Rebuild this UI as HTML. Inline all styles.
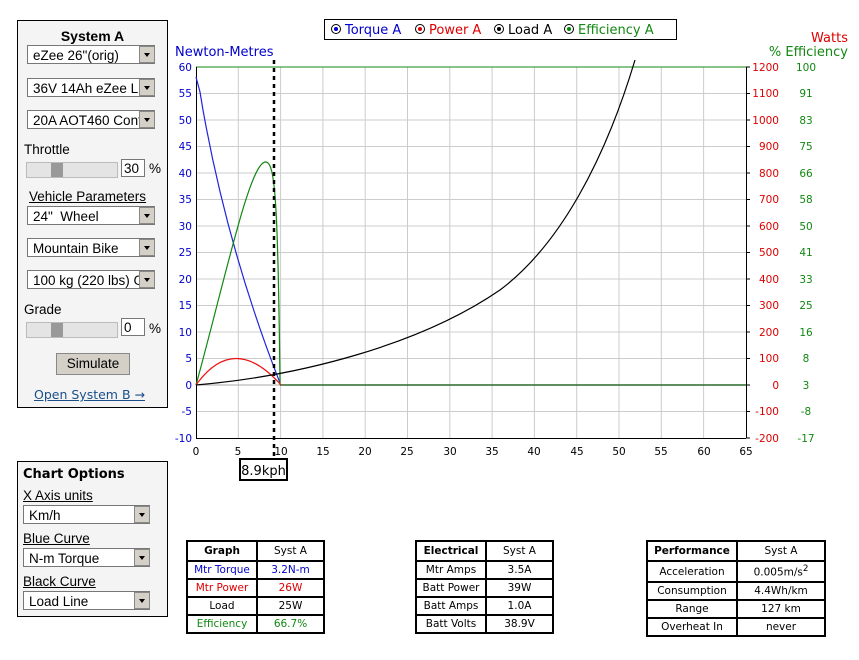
<!DOCTYPE html>
<html><head><meta charset="utf-8"><style>
body{margin:0;width:859px;height:660px;background:#fff;font-family:"Liberation Sans",Arial,sans-serif;position:relative;overflow:hidden}
.a{position:absolute}
.box{position:absolute;border:1px solid #000;background:#f4f4f4}
.sel{position:absolute;left:9px;width:128px;height:19px;border:1px solid #777;border-right:none;background:#fff;font-size:13.5px;line-height:19px;padding-left:5px;box-sizing:border-box;white-space:nowrap;overflow:hidden}
.sel .b{position:absolute;right:0;top:0;width:16px;height:17px;background:#d4d0c8;border:1px solid #888;box-sizing:border-box}
.sel .b:after{content:"";position:absolute;left:4px;top:6px;border-left:3.5px solid transparent;border-right:3.5px solid transparent;border-top:4px solid #000}
.lbl{position:absolute;font-size:13.5px}
.u{text-decoration:underline}
.slider{position:absolute;width:90px;height:14px;background:#e4e4e4;border:1px solid #bbb}
.slider i{position:absolute;left:24px;top:0;width:12px;height:14px;background:#999}
.num{position:absolute;width:24px;height:18px;border:1px solid #777;background:#fff;font-size:13.5px;line-height:18px;padding-left:2px;box-sizing:border-box}
table{position:absolute;border-collapse:collapse;font-family:"DejaVu Sans",Verdana,sans-serif;font-size:10.5px}
td{border:2px solid #000;text-align:center;padding:0;height:16px}
th{border:2px solid #000;height:16px;font-size:10.5px}
</style></head><body>

<div class="box" style="left:17px;top:20px;width:149px;height:386px">
 <div class="lbl" style="left:0;width:149px;text-align:center;top:7px;font-weight:bold;font-size:14px">System A</div>
 <div class="sel" style="top:24px">eZee 26"(orig)<span class="b"></span></div>
 <div class="sel" style="top:57px">36V 14Ah eZee Li<span class="b"></span></div>
 <div class="sel" style="top:89px">20A AOT460 Cont<span class="b"></span></div>
 <div class="lbl" style="left:6px;top:121px">Throttle</div>
 <div class="slider" style="left:8px;top:141px"><i></i></div>
 <div class="num" style="left:103px;top:138px">30</div><div class="lbl" style="left:131px;top:140px">%</div>
 <div class="lbl u" style="left:11px;top:168px">Vehicle Parameters</div>
 <div class="sel" style="top:185px">24"&nbsp; Wheel<span class="b"></span></div>
 <div class="sel" style="top:217px">Mountain Bike<span class="b"></span></div>
 <div class="sel" style="top:249px">100 kg (220 lbs) G<span class="b"></span></div>
 <div class="lbl" style="left:6px;top:281px">Grade</div>
 <div class="slider" style="left:8px;top:301px"><i></i></div>
 <div class="num" style="left:103px;top:297px">0</div><div class="lbl" style="left:131px;top:300px">%</div>
 <div class="a" style="left:38px;top:332px;width:72px;height:20px;background:#d4d0c8;border:1px solid #888;font-size:13.5px;line-height:20px;text-align:center">Simulate</div>
 <div class="lbl" style="left:16px;top:366px;color:#1a4f8a;text-decoration:underline;font-family:'DejaVu Sans',sans-serif;font-size:12.5px">Open System B →</div>
</div>

<div class="box" style="left:17px;top:461px;width:149px;height:154px">
 <div class="lbl" style="left:5px;top:5px;font-weight:bold;font-family:'DejaVu Sans',sans-serif;font-size:13px">Chart Options</div>
 <div class="lbl u" style="left:5px;top:26px">X Axis units</div>
 <div class="sel" style="left:5px;top:43px;width:127px">Km/h<span class="b"></span></div>
 <div class="lbl u" style="left:5px;top:69px">Blue Curve</div>
 <div class="sel" style="left:5px;top:86px;width:127px">N-m Torque<span class="b"></span></div>
 <div class="lbl u" style="left:5px;top:112px">Black Curve</div>
 <div class="sel" style="left:5px;top:129px;width:127px">Load Line<span class="b"></span></div>
</div>

<svg class="a" style="left:0;top:0" width="859" height="530" font-family="DejaVu Sans,Verdana,sans-serif" font-size="10.5">
 <rect x="324.5" y="19.5" width="352" height="20" fill="#fff" stroke="#000"/>
 <g font-size="13">
  <circle cx="336" cy="29" r="4.5" fill="#fff" stroke="#000"/><circle cx="336" cy="29" r="2" fill="#00c"/>
  <text x="345" y="34" fill="#0000cc">Torque A</text>
  <circle cx="420" cy="29" r="4.5" fill="#fff" stroke="#000"/><circle cx="420" cy="29" r="2" fill="#d00"/>
  <text x="429" y="34" fill="#dd0000">Power A</text>
  <circle cx="499" cy="29" r="4.5" fill="#fff" stroke="#000"/><circle cx="499" cy="29" r="2" fill="#000"/>
  <text x="508" y="34" fill="#000">Load A</text>
  <circle cx="569" cy="29" r="4.5" fill="#fff" stroke="#000"/><circle cx="569" cy="29" r="2" fill="#080"/>
  <text x="578" y="34" fill="#118811">Efficiency A</text>
  <text x="175" y="56" fill="#0000cc">Newton-Metres</text>
  <text x="848" y="42" fill="#dd0000" text-anchor="end">Watts</text>
  <text x="848" y="56" fill="#118811" text-anchor="end">% Efficiency</text>
 </g>
 <g stroke="#ccc" stroke-width="1">
  <line x1="238.3" y1="67" x2="238.3" y2="438"/><line x1="280.6" y1="67" x2="280.6" y2="438"/><line x1="322.9" y1="67" x2="322.9" y2="438"/><line x1="365.2" y1="67" x2="365.2" y2="438"/><line x1="407.5" y1="67" x2="407.5" y2="438"/><line x1="449.8" y1="67" x2="449.8" y2="438"/><line x1="492.1" y1="67" x2="492.1" y2="438"/><line x1="534.4" y1="67" x2="534.4" y2="438"/><line x1="576.7" y1="67" x2="576.7" y2="438"/><line x1="619" y1="67" x2="619" y2="438"/><line x1="661.3" y1="67" x2="661.3" y2="438"/><line x1="703.6" y1="67" x2="703.6" y2="438"/>
  <line x1="196" y1="93.5" x2="746" y2="93.5"/><line x1="196" y1="120" x2="746" y2="120"/><line x1="196" y1="146.5" x2="746" y2="146.5"/><line x1="196" y1="173" x2="746" y2="173"/><line x1="196" y1="199.5" x2="746" y2="199.5"/><line x1="196" y1="226" x2="746" y2="226"/><line x1="196" y1="252.5" x2="746" y2="252.5"/><line x1="196" y1="279" x2="746" y2="279"/><line x1="196" y1="305.5" x2="746" y2="305.5"/><line x1="196" y1="332" x2="746" y2="332"/><line x1="196" y1="358.5" x2="746" y2="358.5"/><line x1="196" y1="411.5" x2="746" y2="411.5"/>
 </g>
 <line x1="196" y1="67" x2="746" y2="67" stroke="#118811"/>
 <line x1="196" y1="385" x2="746" y2="385" stroke="#aaa"/>
 <line x1="280" y1="385" x2="746" y2="385" stroke="#2a6a2a" stroke-width="1.5"/>
 <line x1="196.5" y1="67" x2="196.5" y2="438" stroke="#000"/>
 <line x1="746.5" y1="67" x2="746.5" y2="438" stroke="#000"/>
 <line x1="196" y1="438.5" x2="746" y2="438.5" stroke="#000"/>
 <g fill="#0000cc" text-anchor="end">
  <text x="192" y="71">60</text><text x="192" y="97">55</text><text x="192" y="124">50</text><text x="192" y="150">45</text><text x="192" y="177">40</text><text x="192" y="203">35</text><text x="192" y="230">30</text><text x="192" y="256">25</text><text x="192" y="283">20</text><text x="192" y="309">15</text><text x="192" y="336">10</text><text x="192" y="362">5</text><text x="192" y="389">0</text><text x="192" y="415">-5</text><text x="192" y="442">-10</text>
 </g>
 <g fill="#dd0000" text-anchor="end">
  <text x="779" y="71">1200</text><text x="779" y="97">1100</text><text x="779" y="124">1000</text><text x="779" y="150">900</text><text x="779" y="177">800</text><text x="779" y="203">700</text><text x="779" y="230">600</text><text x="779" y="256">500</text><text x="779" y="283">400</text><text x="779" y="309">300</text><text x="779" y="336">200</text><text x="779" y="362">100</text><text x="779" y="389">0</text><text x="779" y="415">-100</text><text x="779" y="442">-200</text>
 </g>
 <g fill="#118811" text-anchor="middle">
  <text x="806" y="71">100</text><text x="806" y="97">91</text><text x="806" y="124">83</text><text x="806" y="150">75</text><text x="806" y="177">66</text><text x="806" y="203">58</text><text x="806" y="230">50</text><text x="806" y="256">41</text><text x="806" y="283">33</text><text x="806" y="309">25</text><text x="806" y="336">16</text><text x="806" y="362">8</text><text x="806" y="389">3</text><text x="806" y="415">-8</text><text x="806" y="442">-17</text>
 </g>
 <g fill="#000" text-anchor="middle">
  <text x="196" y="455">0</text><text x="238" y="455">5</text><text x="281" y="455">10</text><text x="323" y="455">15</text><text x="365" y="455">20</text><text x="407" y="455">25</text><text x="450" y="455">30</text><text x="492" y="455">35</text><text x="534" y="455">40</text><text x="577" y="455">45</text><text x="619" y="455">50</text><text x="661" y="455">55</text><text x="704" y="455">60</text><text x="746" y="455">65</text>
 </g>
 <g stroke="#000" stroke-width="1">
  <path d="M746,67h4M746,93.5h4M746,120h4M746,146.5h4M746,173h4M746,199.5h4M746,226h4M746,252.5h4M746,279h4M746,305.5h4M746,332h4M746,358.5h4M746,385h4M746,411.5h4M746,438h4"/>
 </g>
 <g fill="none" stroke-width="1.2">
  <path d="M196,77 L200,92 L203,110 Q228,250 280,383" stroke="#2222dd"/>
  <path d="M196,385 C225,280 250,160 266,162 C275,163 278,200 280,385" stroke="#118811"/>
  <path d="M196,385 Q234,332 281,385" stroke="#ee1111"/>
  <path d="M196,385 C300,376 420,345 500,290 C560,245 605,160 635,60" stroke="#000"/>
 </g>
 <line x1="274" y1="60" x2="274" y2="460" stroke="#000" stroke-width="2.5" stroke-dasharray="4,4"/>
 <rect x="240" y="459" width="47" height="21" fill="#fff" stroke="#000" stroke-width="2"/>
 <text x="263.5" y="475" text-anchor="middle" font-size="13" fill="#000">8.9kph</text>
</svg>

<table style="left:186px;top:540px;width:139px">
 <tr><th style="width:66px">Graph</th><td>Syst A</td></tr>
 <tr><td style="color:#0000cc">Mtr Torque</td><td style="color:#0000cc">3.2N-m</td></tr>
 <tr><td style="color:#dd0000">Mtr Power</td><td style="color:#dd0000">26W</td></tr>
 <tr><td>Load</td><td>25W</td></tr>
 <tr><td style="color:#118811">Efficiency</td><td style="color:#118811">66.7%</td></tr>
</table>
<table style="left:415px;top:540px;width:139px">
 <tr><th style="width:66px">Electrical</th><td>Syst A</td></tr>
 <tr><td>Mtr Amps</td><td>3.5A</td></tr>
 <tr><td>Batt Power</td><td>39W</td></tr>
 <tr><td>Batt Amps</td><td>1.0A</td></tr>
 <tr><td>Batt Volts</td><td>38.9V</td></tr>
</table>
<table style="left:646px;top:540px;width:180px">
 <tr><th style="width:86px">Performance</th><td>Syst A</td></tr>
 <tr><td style="height:19px">Acceleration</td><td>0.005m/s<sup>2</sup></td></tr>
 <tr><td>Consumption</td><td>4.4Wh/km</td></tr>
 <tr><td>Range</td><td>127 km</td></tr>
 <tr><td>Overheat In</td><td>never</td></tr>
</table>
</body></html>
